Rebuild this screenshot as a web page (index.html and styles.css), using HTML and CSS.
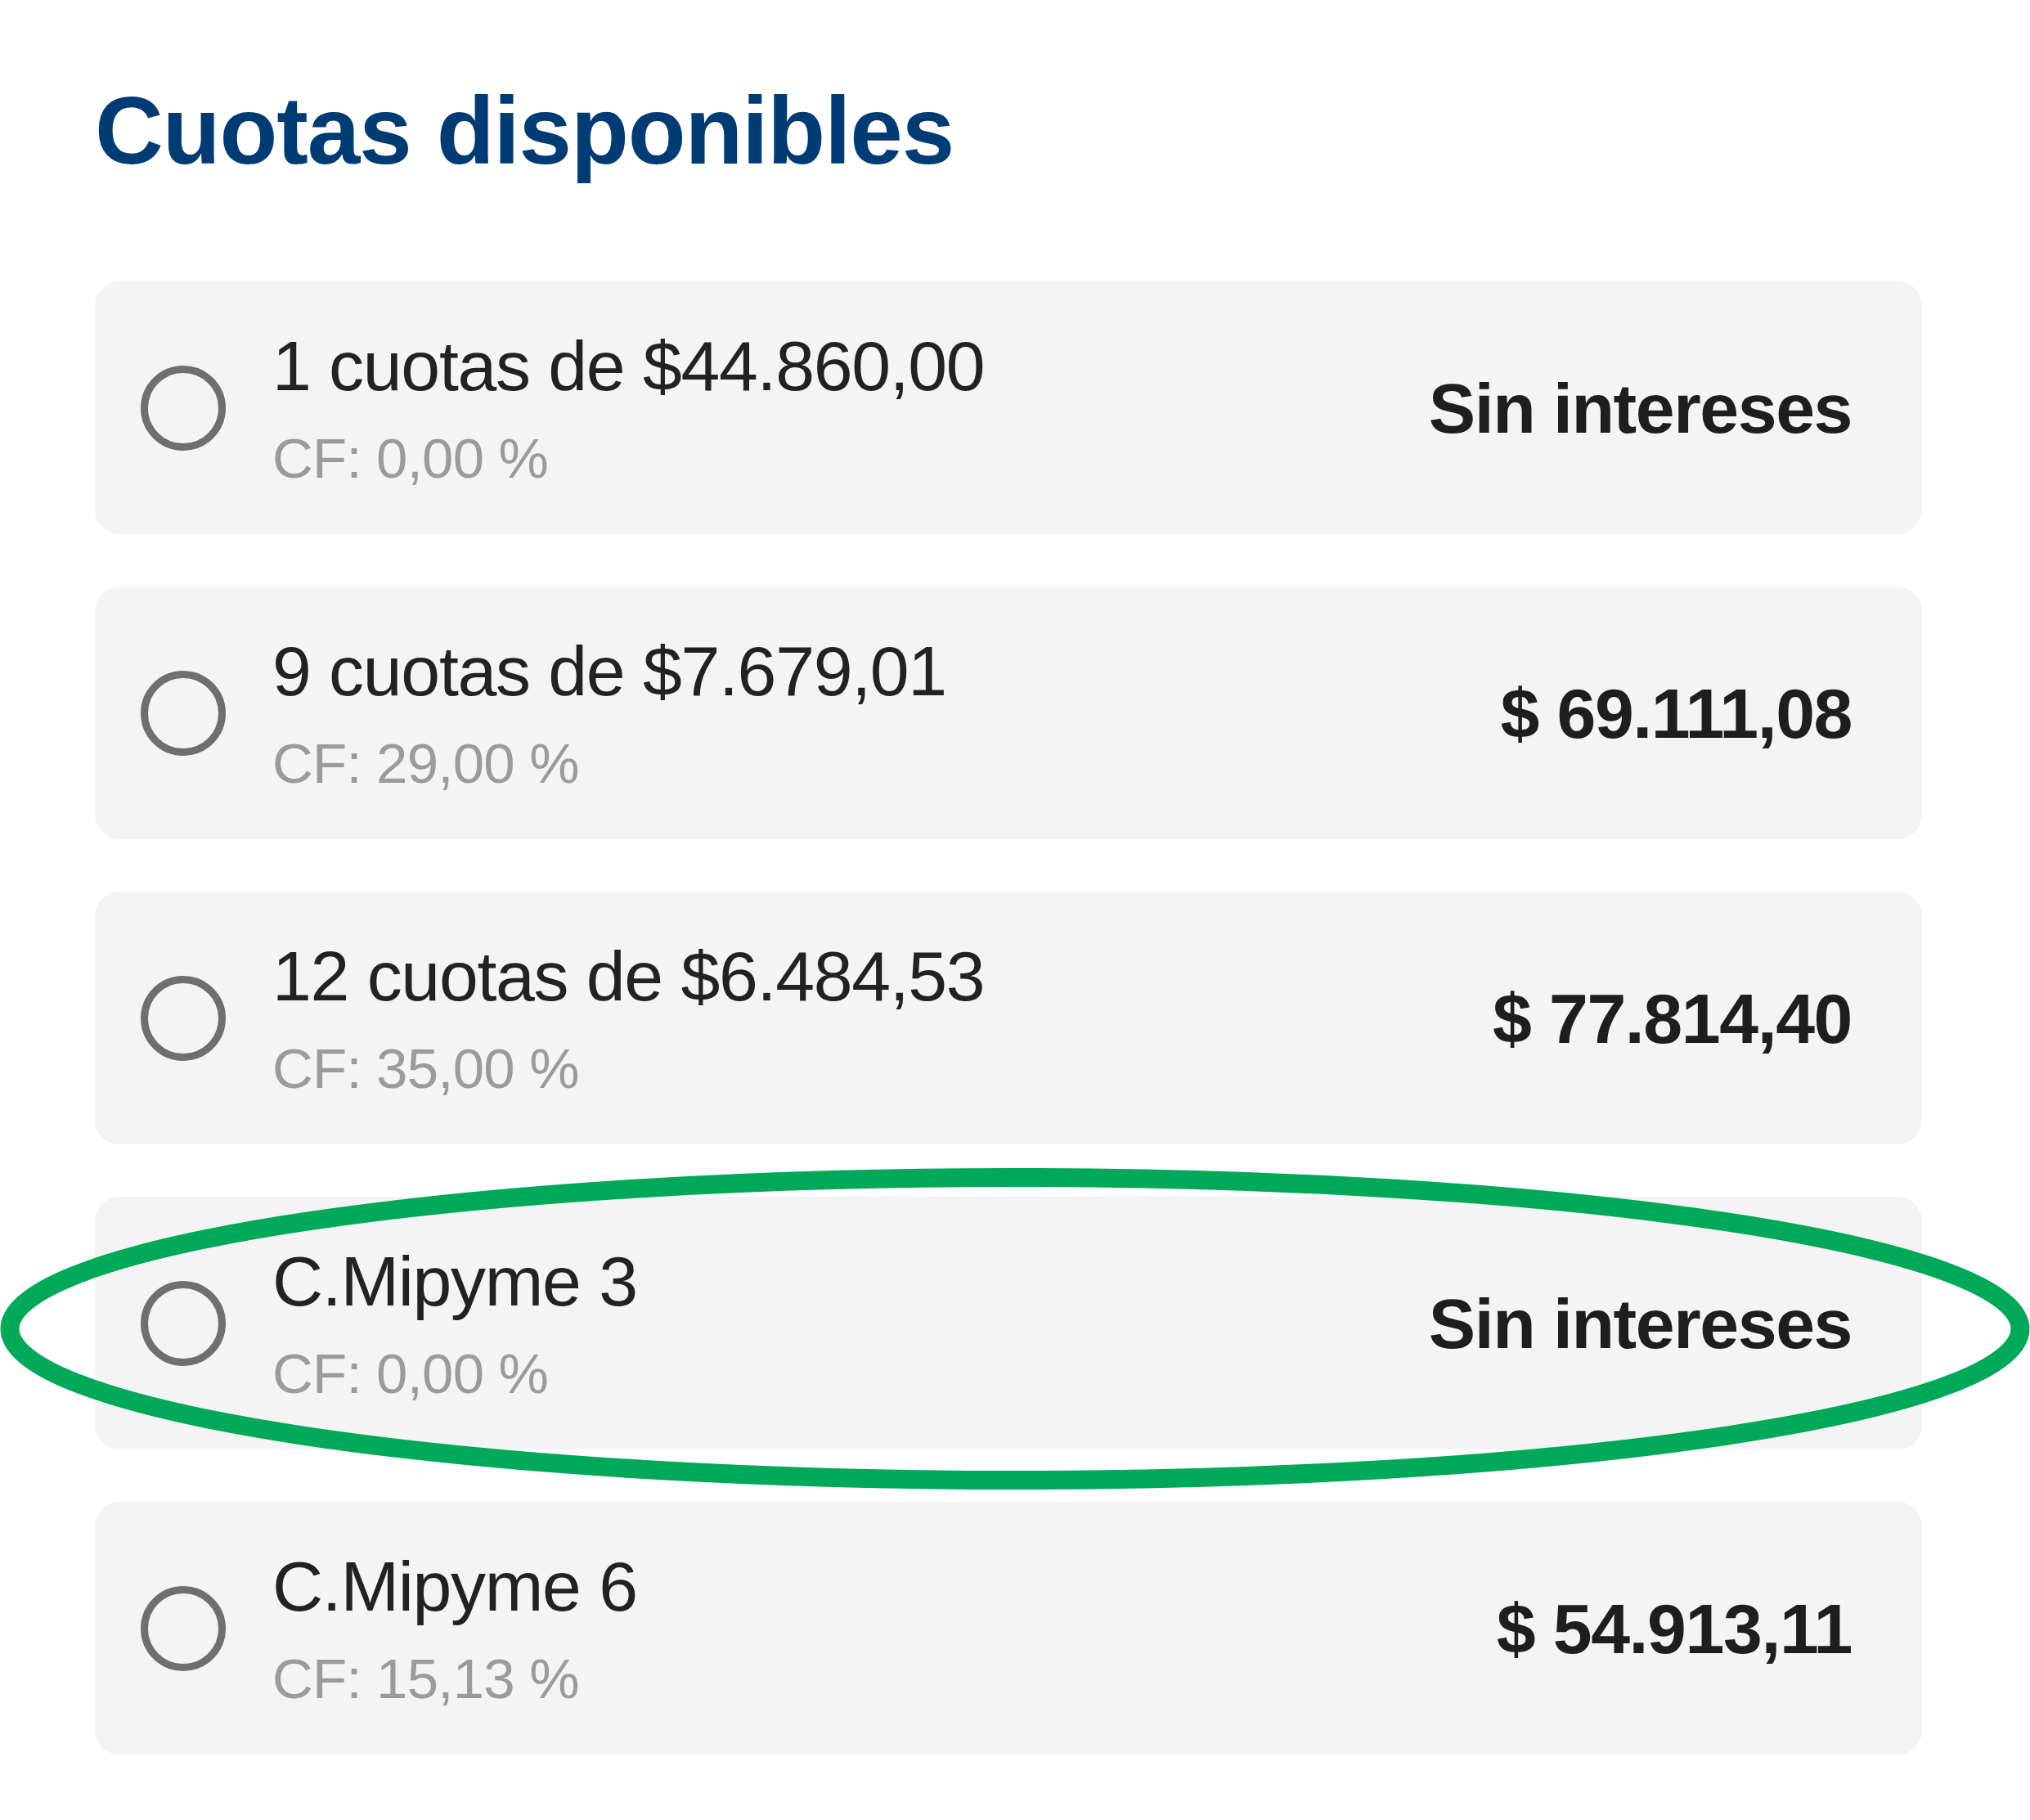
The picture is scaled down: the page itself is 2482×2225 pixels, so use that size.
FILE: index.html
```html
<!DOCTYPE html>
<html lang="es">
<head>
<meta charset="utf-8">
<title>Cuotas disponibles</title>
<link rel="stylesheet" href="styles.css">
</head>
<body>
<main class="page">
  <h1 class="title">Cuotas disponibles</h1>
  <ul class="list">
    <li class="card">
      <span class="radio"></span>
      <div class="info">
        <div class="main">1 cuotas de $44.860,00</div>
        <div class="cf">CF: 0,00 %</div>
      </div>
      <div class="total">Sin intereses</div>
    </li>
    <li class="card">
      <span class="radio"></span>
      <div class="info">
        <div class="main">9 cuotas de $7.679,01</div>
        <div class="cf">CF: 29,00 %</div>
      </div>
      <div class="total">$ 69.111,08</div>
    </li>
    <li class="card">
      <span class="radio"></span>
      <div class="info">
        <div class="main">12 cuotas de $6.484,53</div>
        <div class="cf">CF: 35,00 %</div>
      </div>
      <div class="total">$ 77.814,40</div>
    </li>
    <li class="card">
      <span class="radio"></span>
      <div class="info">
        <div class="main">C.Mipyme 3</div>
        <div class="cf">CF: 0,00 %</div>
      </div>
      <div class="total">Sin intereses</div>
    </li>
    <li class="card">
      <span class="radio"></span>
      <div class="info">
        <div class="main">C.Mipyme 6</div>
        <div class="cf">CF: 15,13 %</div>
      </div>
      <div class="total">$ 54.913,11</div>
    </li>
  </ul>
</main>
<svg class="highlight" width="2482" height="2225" viewBox="0 0 2482 2225" aria-hidden="true">
  <ellipse cx="1241" cy="1624.5" rx="1229" ry="185" fill="none" stroke="#00a859" stroke-width="23"/>
</svg>
</body>
</html>
```
FILE: styles.css
```css
html, body {
  margin: 0;
  padding: 0;
  background: #ffffff;
}

body {
  position: relative;
  width: 2482px;
  min-height: 2225px;
  font-family: "Liberation Sans", Arial, sans-serif;
  color: #222222;
}

.page {
  padding: 95px 132px 0 116px;
}

.title {
  margin: 0;
  font-size: 116px;
  line-height: 131px;
  font-weight: 700;
  letter-spacing: -1.1px;
  color: #003b73;
}

.list {
  list-style: none;
  margin: 118px 0 0 0;
  padding: 0;
  display: flex;
  flex-direction: column;
  gap: 64px;
}

.card {
  height: 309px;
  box-sizing: border-box;
  display: flex;
  align-items: center;
  padding: 0 86px 0 56px;
  background: #f4f4f4;
  border-radius: 30px;
}

.radio {
  flex: none;
  width: 104px;
  height: 104px;
  box-sizing: border-box;
  border: 9px solid #6f6f6f;
  border-radius: 50%;
}

.info {
  flex: 1;
  margin-left: 57px;
  display: flex;
  flex-direction: column;
}

.main {
  font-size: 86px;
  line-height: 100px;
  letter-spacing: -1.3px;
  color: #222222;
}

.cf {
  margin-top: 24px;
  font-size: 69px;
  line-height: 80px;
  letter-spacing: -0.8px;
  color: #9b9b9b;
}

.total {
  flex: none;
  font-size: 86px;
  line-height: 100px;
  font-weight: 700;
  letter-spacing: -1.4px;
  color: #1e1e1e;
}

.highlight {
  position: absolute;
  left: 0;
  top: 0;
  pointer-events: none;
}
```
